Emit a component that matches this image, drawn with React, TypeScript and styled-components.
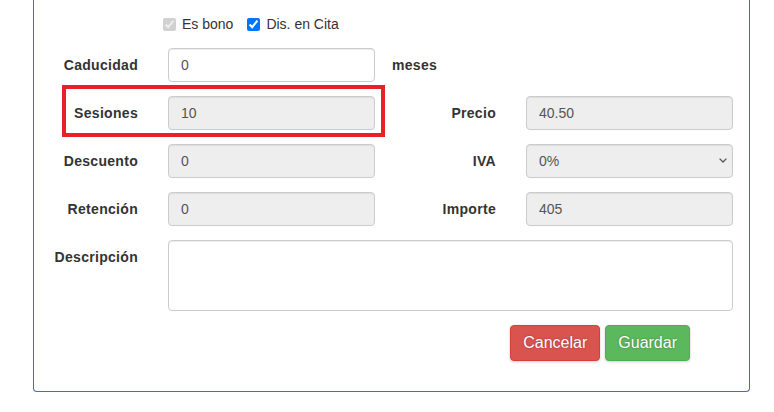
import React from 'react';
import styled, { createGlobalStyle } from 'styled-components';

const GlobalStyle = createGlobalStyle`
    html, body {
        margin: 0;
        padding: 0;
        background: #fff;
    }
    body {
        font-family: "Liberation Sans", Arial, Helvetica, sans-serif;
        font-size: 14px;
        line-height: 20px;
        color: #333;
    }
`;

const Page = styled.div`
    padding-left: 33px;
    width: 717px;
`;

const Panel = styled.div`
    border: 1px solid #4272a8;
    border-top: none;
    border-radius: 0 0 4px 4px;
    padding: 14px 15px 30px 0;
    box-shadow: 0 1px 1px rgba(0, 0, 0, 0.05);
`;

const CheckRow = styled.div`
    display: flex;
    align-items: center;
    height: 20px;
    padding-left: 129px;
    margin-bottom: 14px;
`;

const CheckLabel = styled.label`
    display: flex;
    align-items: center;
    margin-right: 14px;
`;

const Check = styled.input`
    width: 13px;
    height: 13px;
    margin: 0 6px 0 0;
`;

const FormGrid = styled.div`
    position: relative;
    display: grid;
    grid-template-columns: 134px 207px 151px 207px;
    row-gap: 14px;
`;

const FieldLabel = styled.label<{ $align?: 'left' | 'right' }>`
    font-weight: bold;
    letter-spacing: 0.3px;
    padding-top: 7px;
    text-align: ${(p) => (p.$align === 'left' ? 'left' : 'right')};
    padding-right: ${(p) => (p.$align === 'left' ? '0' : '30px')};
    padding-left: ${(p) => (p.$align === 'left' ? '17px' : '0')};
    grid-column: ${(p) => (p.$align === 'left' ? 'span 2' : 'auto')};
`;

const Input = styled.input`
    box-sizing: border-box;
    height: 34px;
    width: 100%;
    padding: 6px 12px;
    font: inherit;
    color: #555;
    background: ${(p) => (p.disabled ? '#eee' : '#fff')};
    border: 1px solid #ccc;
    border-radius: 4px;
    box-shadow: inset 0 1px 1px rgba(0, 0, 0, 0.075);
    outline: none;
    opacity: 1;
    -webkit-text-fill-color: #555;
`;

const SelectWrap = styled.div`
    position: relative;
`;

const Select = styled.select`
    box-sizing: border-box;
    appearance: none;
    height: 34px;
    width: 100%;
    padding: 6px 12px;
    font: inherit;
    color: #555;
    background: #eee;
    border: 1px solid #ccc;
    border-radius: 4px;
    box-shadow: inset 0 1px 1px rgba(0, 0, 0, 0.075);
    opacity: 1;
`;

const Chevron = styled.svg`
    position: absolute;
    right: 6px;
    top: 14px;
    width: 8px;
    height: 5px;
    pointer-events: none;
`;

const TextArea = styled.textarea`
    grid-column: 2 / -1;
    box-sizing: border-box;
    height: 71px;
    width: 100%;
    padding: 6px 12px;
    font: inherit;
    color: #555;
    background: #fff;
    border: 1px solid #ccc;
    border-radius: 4px;
    box-shadow: inset 0 1px 1px rgba(0, 0, 0, 0.075);
    resize: none;
    display: block;
`;

const Actions = styled.div`
    grid-column: 2 / -1;
    display: flex;
    justify-content: flex-end;
    gap: 5px;
    padding-right: 43px;
`;

const Button = styled.button<{ $variant: 'danger' | 'success' }>`
    height: 36px;
    padding: 6px 12px;
    font-family: inherit;
    font-size: 16px;
    line-height: 22px;
    color: #fff;
    border-radius: 4px;
    border: 1px solid ${(p) => (p.$variant === 'danger' ? '#d43f3a' : '#4cae4c')};
    background: ${(p) => (p.$variant === 'danger' ? '#d9534f' : '#5cb85c')};
    text-shadow: 0 0 2px rgba(0, 0, 0, 0.35);
    box-shadow: 0 1px 3px rgba(0, 0, 0, 0.2);
    cursor: pointer;
`;

const Highlight = styled.div`
    position: absolute;
    grid-row: 2 / 3;
    grid-column: 1 / 3;
    left: 28px;
    right: -10px;
    top: -11px;
    bottom: -7px;
    border: 4px solid #e8202a;
    pointer-events: none;
`;

export default function App() {
    return (
        <Page>
            <GlobalStyle />
            <Panel>
                <CheckRow>
                    <CheckLabel>
                        <Check type='checkbox' checked disabled readOnly />
                        Es bono
                    </CheckLabel>
                    <CheckLabel>
                        <Check type='checkbox' checked readOnly />
                        Dis. en Cita
                    </CheckLabel>
                </CheckRow>
                <FormGrid>
                    <FieldLabel>Caducidad</FieldLabel>
                    <Input defaultValue='0' />
                    <FieldLabel $align='left'>meses</FieldLabel>

                    <FieldLabel>Sesiones</FieldLabel>
                    <Input value='10' disabled readOnly />
                    <FieldLabel>Precio</FieldLabel>
                    <Input value='40.50' disabled readOnly />

                    <FieldLabel>Descuento</FieldLabel>
                    <Input value='0' disabled readOnly />
                    <FieldLabel>IVA</FieldLabel>
                    <SelectWrap>
                        <Select disabled defaultValue='0'>
                            <option value='0'>0%</option>
                        </Select>
                        <Chevron viewBox='0 0 8 5'>
                            <path d='M0.6 0.6 L4 4 L7.4 0.6' fill='none' stroke='#555' strokeWidth='1.3' />
                        </Chevron>
                    </SelectWrap>

                    <FieldLabel>Retención</FieldLabel>
                    <Input value='0' disabled readOnly />
                    <FieldLabel>Importe</FieldLabel>
                    <Input value='405' disabled readOnly />

                    <FieldLabel>Descripción</FieldLabel>
                    <TextArea />

                    <Actions>
                        <Button $variant='danger'>Cancelar</Button>
                        <Button $variant='success'>Guardar</Button>
                    </Actions>

                    <Highlight />
                </FormGrid>
            </Panel>
        </Page>
    );
}
